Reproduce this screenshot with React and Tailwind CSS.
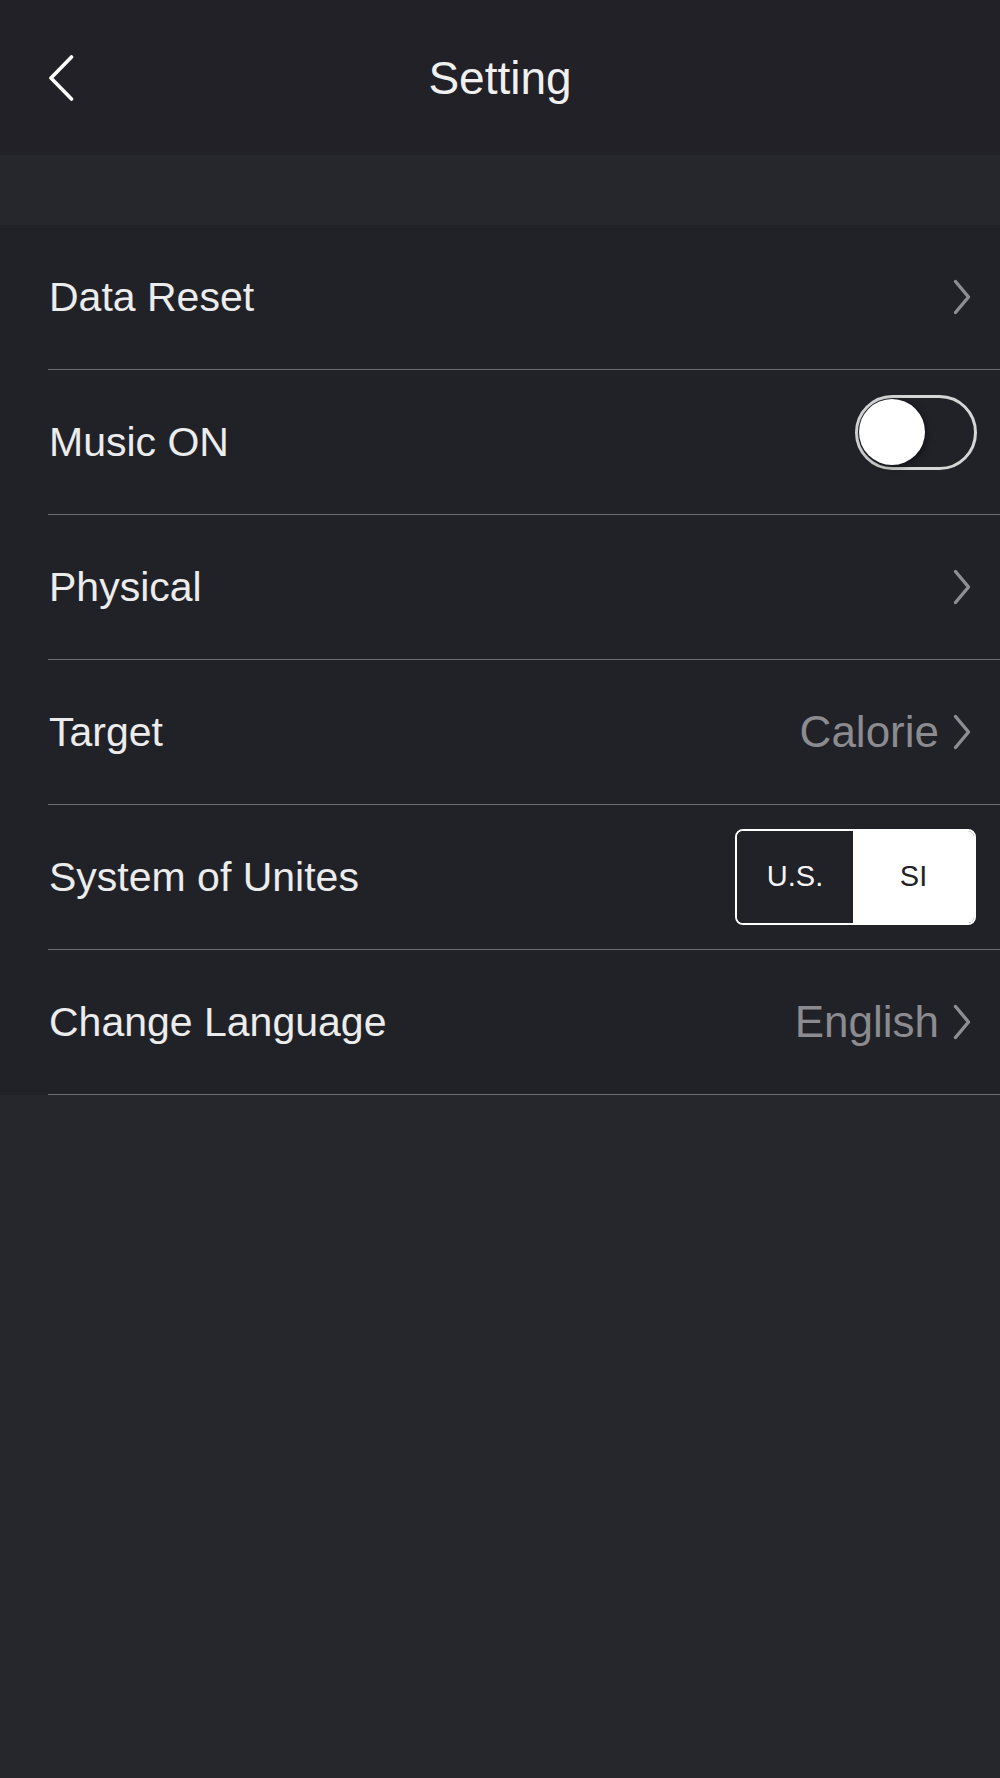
import React from 'react';

const Chevron = () => (
  <svg width="18" height="36" viewBox="0 0 18 36" fill="none">
    <path d="M2.5 2.5 L15.5 18 L2.5 33.5" stroke="#8d8d92" strokeWidth="3.4" strokeLinecap="round" strokeLinejoin="round" />
  </svg>
);

const Row = ({ label, children }) => (
  <div className="pl-[48px]">
    <div className="h-[145px] border-b border-[#6d6e73] flex items-center justify-between">
      <span className="text-[41px] text-[#ececec] leading-none pl-[1px]">{label}</span>
      {children}
    </div>
  </div>
);

const Toggle = () => (
  <div className="mb-[20px] mr-[23px] w-[122px] h-[75px] rounded-full border-[3px] border-[#d6d6d6] bg-[#212228] flex items-center pl-[1px]">
    <div className="w-[66px] h-[66px] rounded-full bg-white shadow-[2px_2px_6px_rgba(0,0,0,0.45)]" />
  </div>
);

const UnitSwitch = () => (
  <div className="mr-[24px] flex w-[241px] h-[96px] rounded-[8px] border-2 border-white overflow-hidden">
    <div className="w-[116px] flex items-center justify-center bg-[#212228] text-[29px] text-[#f4f4f4]">U.S.</div>
    <div className="flex-1 flex items-center justify-center bg-white text-[29px] text-[#222228]">SI</div>
  </div>
);

const Value = ({ text }) => (
  <div className="flex items-center gap-[14px] mr-[29px]">
    <span className="text-[44px] text-[#8b8b90] leading-none">{text}</span>
    <Chevron />
  </div>
);

export default function App() {
  return (
    <div className="w-[1000px] min-h-[1778px] bg-[#26272c] font-['Liberation_Sans',Arial,sans-serif]">
      {/* header */}
      <div className="h-[155px] bg-[#212127] flex items-center">
        <div className="w-[160px] pl-[48px] flex items-center">
          <svg width="26" height="46" viewBox="0 0 26 46" fill="none">
            <path d="M23.5 2 L3 23 L23.5 44" stroke="#ffffff" strokeWidth="3.6" strokeLinecap="round" strokeLinejoin="round" />
          </svg>
        </div>
        <div className="flex-1 text-center text-[46px] text-[#f0f0f0] leading-none">Setting</div>
        <div className="w-[160px]" />
      </div>

      {/* spacer band */}
      <div className="h-[70px] bg-[#26272c]" />

      {/* list */}
      <div className="bg-[#212228]">
        <Row label="Data Reset">
          <div className="mr-[29px]"><Chevron /></div>
        </Row>
        <Row label="Music ON">
          <Toggle />
        </Row>
        <Row label="Physical">
          <div className="mr-[29px]"><Chevron /></div>
        </Row>
        <Row label="Target">
          <Value text="Calorie" />
        </Row>
        <Row label="System of Unites">
          <UnitSwitch />
        </Row>
        <Row label="Change Language">
          <Value text="English" />
        </Row>
      </div>
    </div>
  );
}
